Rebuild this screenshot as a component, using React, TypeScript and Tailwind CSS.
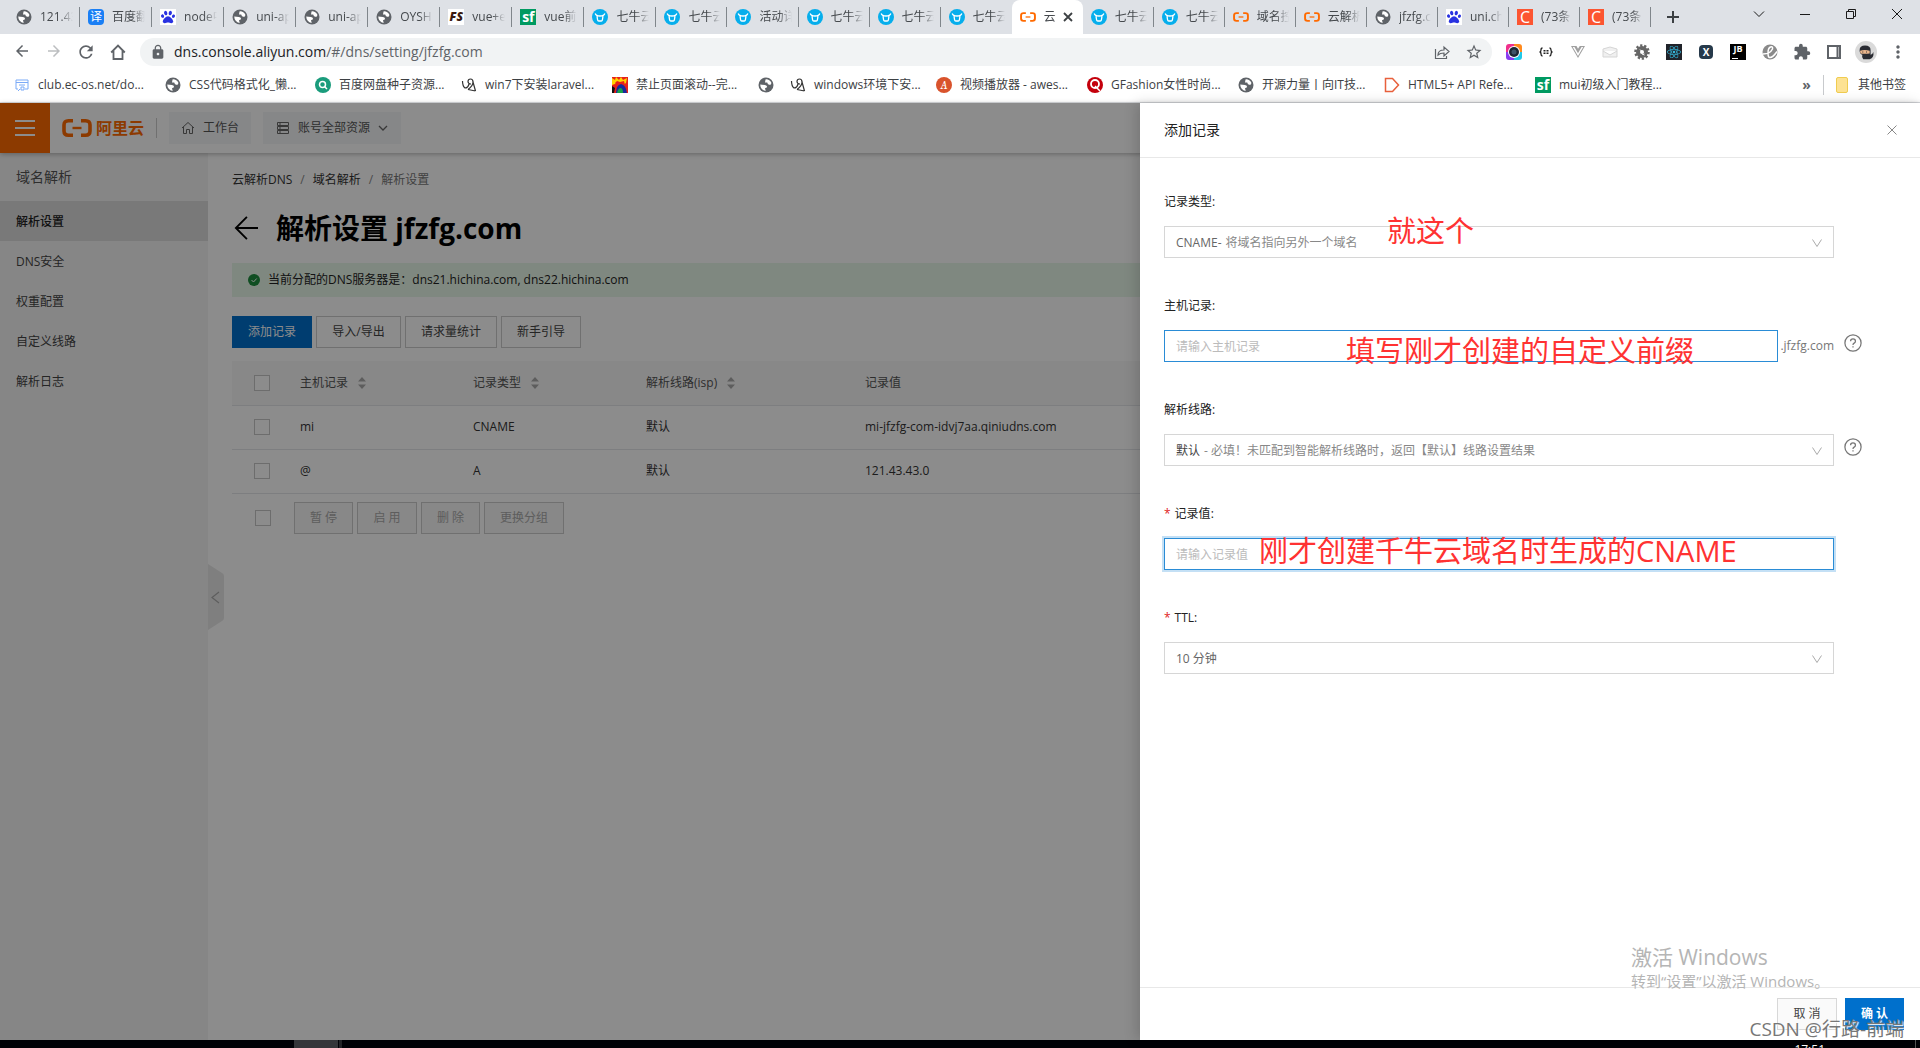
import React from 'react';
import { FaReact, FaVuejs, FaPaw } from 'react-icons/fa';
import {
  MdArrowBack,
  MdArrowForward,
  MdExtension,
  MdLock,
  MdMoreVert,
  MdRefresh,
  MdStarBorder,
} from 'react-icons/md';

type IconName =
  | 'globe' | 'fanyi' | 'baidu' | 'fs' | 'sf' | 'qiniu' | 'aliyun' | 'csdn'
  | 'card' | 'search' | 'quill' | 'flame' | 'awes' | 'gf' | 'html5';

const BracketLogo = ({ className }: { className: string }) => (
  <svg viewBox="0 0 30 18" className={className} fill="none" stroke="#ff6a00">
    <path d="M11 1.800H6.500Q2 1.800 2 6v6q0 4.200 4.500 4.200H11M19 1.800h4.500Q28 1.800 28 6v6q0 4.200-4.500 4.200H19" strokeWidth="3.600" />
    <path d="M10.500 9h9" strokeWidth="2.400" />
  </svg>
);

const SiteIcon = ({ name }: { name: IconName }) => {
  switch (name) {
    case 'globe':
      return (
        <svg viewBox="0 0 16 16" className="size-4 shrink-0">
          <circle cx="8" cy="8" r="7.500" fill="#5f6368" />
          <path d="M2.200 7.500l4.800.5q2.500.5 2 2.300l-2 .9.700 2.700Q2.500 13 2.200 7.500zM7.500 2.400q4-.4 6 3.600l-1.200 2-2.300-.8-.8-1.700H7z" fill="#fff" />
        </svg>
      );
    case 'fanyi':
      return <span className="size-4 shrink-0 rounded-sm bg-[#1a7ff5] text-center text-xs leading-4 text-white">译</span>;
    case 'baidu':
      return (
        <span className="flex size-4 shrink-0 items-center justify-center bg-white">
          <FaPaw className="size-3.5 text-[#2932e1]" />
        </span>
      );
    case 'fs':
      return <span className="size-4 shrink-0 bg-white text-center text-xs leading-4 font-black text-[#3a1a10] italic">FS</span>;
    case 'sf':
      return <span className="size-4 shrink-0 bg-[#009a61] text-center text-sm leading-4 font-bold text-white">sf</span>;
    case 'csdn':
      return <span className="size-4 shrink-0 bg-[#fc5531] text-center text-base leading-4 text-white">C</span>;
    case 'qiniu':
      return (
        <svg viewBox="0 0 16 16" className="size-4 shrink-0">
          <circle cx="8" cy="8" r="8" fill="#06aeec" />
          <path d="M3.200 4.500Q4 7 8 7t4.800-2.500M5 7.200l.6 3.600q.2 1.200 1.200 1.200h2.400q1 0 1.200-1.200l.6-3.600" fill="none" stroke="#fff" strokeWidth="1.300" />
        </svg>
      );
    case 'aliyun':
      return <BracketLogo className="h-2.5 w-4 shrink-0" />;
    case 'card':
      return (
        <svg viewBox="0 0 16 16" className="size-4 shrink-0" fill="none" stroke="#7baaf7">
          <path d="M2 3h12v9h-3M2 3v9h2M2 5.500h12M5 8h6M7 10h3v3H7zM4 14l2-2" />
        </svg>
      );
    case 'search':
      return (
        <svg viewBox="0 0 16 16" className="size-4 shrink-0" fill="none" stroke="#fff" strokeWidth="1.500">
          <circle cx="8" cy="8" r="8" fill="#1a9c7c" stroke="none" />
          <circle cx="7.500" cy="7.500" r="3" />
          <path d="M9.700 9.700l2.300 2.300" />
        </svg>
      );
    case 'quill':
      return (
        <svg viewBox="0 0 16 16" className="size-4 shrink-0" fill="none" stroke="#333" strokeWidth="1.200">
          <path d="M1.500 4q0 5 2.500 7 3 0 4-4M10 7q-3 0-3-2.500T9.500 2 12 5q0 4-5 7.500M12 5l2.500 9M7 12.500l7.500 1.500" />
        </svg>
      );
    case 'flame':
      return (
        <svg viewBox="0 0 16 16" className="size-4 shrink-0">
          <path d="M0 0h16v16H0z" fill="#e8201a" />
          <path d="M0 1l3 2 1-3 3 3 2-3 2 3 4-2-1 5-3 2-8-1-3 1z" fill="#ffd400" />
          <path d="M3 6l2-2 3 1 4-1 1 4-5 1-4-1z" fill="#e8201a" />
          <path d="M4 16q0-8 5-9 5 1 6 9z" fill="#182a9c" />
          <path d="M5 16q1-5 4-5 2 1 2 5z" fill="#17a34a" />
          <path d="M0 9l3 2-1 5H0z" fill="#111" />
        </svg>
      );
    case 'awes':
      return <span className="size-4 shrink-0 rounded-full bg-[#d9532c] text-center font-serif text-xs leading-4 text-white italic">A</span>;
    case 'gf':
      return (
        <svg viewBox="0 0 16 16" className="size-4 shrink-0">
          <circle cx="8" cy="8" r="8" fill="#c4000c" />
          <circle cx="8" cy="7" r="4" fill="none" stroke="#fff" strokeWidth="1.800" />
          <path d="M8 9l5 5" stroke="#fff" strokeWidth="1.500" />
        </svg>
      );
    case 'html5':
      return (
        <svg viewBox="0 0 16 16" className="size-4 shrink-0" fill="none" stroke="#e8603c" strokeWidth="1.500">
          <path d="M1.500 1.500h7l6 6.500-6 6.500h-7z" />
        </svg>
      );
  }
};

const tabs: { icon: IconName; title: string; active?: boolean }[] = [
  { icon: 'globe', title: '121.43' },
  { icon: 'fanyi', title: '百度翻' },
  { icon: 'baidu', title: 'node中' },
  { icon: 'globe', title: 'uni-ap' },
  { icon: 'globe', title: 'uni-ap' },
  { icon: 'globe', title: 'OYSH' },
  { icon: 'fs', title: 'vue+e' },
  { icon: 'sf', title: 'vue前' },
  { icon: 'qiniu', title: '七牛云' },
  { icon: 'qiniu', title: '七牛云' },
  { icon: 'qiniu', title: '活动详' },
  { icon: 'qiniu', title: '七牛云' },
  { icon: 'qiniu', title: '七牛云' },
  { icon: 'qiniu', title: '七牛云' },
  { icon: 'aliyun', title: '云', active: true },
  { icon: 'qiniu', title: '七牛云' },
  { icon: 'qiniu', title: '七牛云' },
  { icon: 'aliyun', title: '域名控' },
  { icon: 'aliyun', title: '云解析' },
  { icon: 'globe', title: 'jfzfg.c' },
  { icon: 'baidu', title: 'uni.ch' },
  { icon: 'csdn', title: '(73条' },
  { icon: 'csdn', title: '(73条' },
];

const bookmarks: { icon: IconName; title: string; width: string }[] = [
  { icon: 'card', title: 'club.ec-os.net/do...', width: 'w-[151px]' },
  { icon: 'globe', title: 'CSS代码格式化_懒...', width: 'w-[150px]' },
  { icon: 'search', title: '百度网盘种子资源...', width: 'w-[146px]' },
  { icon: 'quill', title: 'win7下安装laravel...', width: 'w-[151px]' },
  { icon: 'flame', title: '禁止页面滚动--完...', width: 'w-[146px]' },
  { icon: 'globe', title: '', width: 'w-8' },
  { icon: 'quill', title: 'windows环境下安...', width: 'w-[146px]' },
  { icon: 'awes', title: '视频播放器 - awes...', width: 'w-[151px]' },
  { icon: 'gf', title: 'GFashion女性时尚...', width: 'w-[151px]' },
  { icon: 'globe', title: '开源力量丨向IT技...', width: 'w-[146px]' },
  { icon: 'html5', title: 'HTML5+ API Refe...', width: 'w-[151px]' },
  { icon: 'sf', title: 'mui初级入门教程...', width: 'w-[151px]' },
];

const WindowControls = () => (
  <div className="flex h-7 text-[#1a1a1a]">
    <button aria-label="搜索标签页" className="flex w-[46px] items-center justify-center">
      <svg viewBox="0 0 12 12" className="size-3" fill="none" stroke="currentColor"><path d="M1 3.500l5 5 5-5" /></svg>
    </button>
    <button aria-label="最小化" className="flex w-[46px] items-center justify-center">
      <svg viewBox="0 0 12 12" className="size-3" fill="none" stroke="currentColor"><path d="M1 6.500h10" /></svg>
    </button>
    <button aria-label="还原" className="flex w-[46px] items-center justify-center">
      <svg viewBox="0 0 12 12" className="size-3" fill="none" stroke="currentColor"><path d="M1.500 3.500h7v7h-7zM3.500 3.500v-2h7v7h-2" /></svg>
    </button>
    <button aria-label="关闭" className="flex w-[46px] items-center justify-center">
      <svg viewBox="0 0 12 12" className="size-3" fill="none" stroke="currentColor"><path d="M1 1l10 10M11 1L1 11" /></svg>
    </button>
  </div>
);

const TabStrip = () => (
  <div className="flex h-[34px] bg-[#dee1e6]">
    <div className="flex min-w-0 flex-1 pl-2">
      {tabs.map((tab, index) => {
        const divider = !tab.active && !tabs[index + 1]?.active;
        return (
          // the leading tabs take the spare pixel of the strip
          <div key={index} className={index < 9 ? 'flex w-0 grow-72' : 'flex w-0 grow-71'}>
            <div
              className={
                tab.active
                  ? 'flex min-w-0 flex-1 items-center rounded-t-lg bg-white pl-2'
                  : 'flex min-w-0 flex-1 items-center pl-2'
              }
            >
              <SiteIcon name={tab.icon} />
              <span className="ml-2 min-w-0 flex-1 overflow-hidden mask-r-from-60% text-xs whitespace-nowrap text-[#45494d]">
                {tab.title}
              </span>
              {tab.active && (
                <button aria-label="关闭标签页" className="mr-2.5 ml-1">
                  <svg viewBox="0 0 10 10" className="size-2.5" stroke="#3c4043" strokeWidth="1.800"><path d="M1 1l8 8M9 1L1 9" /></svg>
                </button>
              )}
              {!tab.active && <span className={divider ? 'ml-1.5 h-5 w-px bg-[#80868b]' : 'ml-1.5 h-5 w-px'} />}
            </div>
          </div>
        );
      })}
    </div>
    <div className="flex w-[269px] shrink-0 justify-between">
      <button aria-label="新标签页" className="flex w-11 items-center justify-center">
        <svg viewBox="0 0 14 14" className="size-3.5" stroke="#3c4043" strokeWidth="2"><path d="M7 1v12M1 7h12" /></svg>
      </button>
      <WindowControls />
    </div>
  </div>
);

const extensions = [
  <svg viewBox="0 0 16 16" className="size-4">
    <path d="M0 3a3 3 0 013-3h5v8H0z" fill="#f0308c" />
    <path d="M8 0h5a3 3 0 013 3v5H8z" fill="#ff8a1e" />
    <path d="M0 8h8v8H3a3 3 0 01-3-3z" fill="#8a3cf0" />
    <path d="M8 8h8v5a3 3 0 01-3 3H8z" fill="#20c8e8" />
    <circle cx="8" cy="8" r="6" fill="#fff" />
    <circle cx="8" cy="8" r="5" fill="#1c2733" />
    <circle cx="8" cy="8" r="2.500" fill="#3f5468" />
  </svg>,
  <svg viewBox="0 0 16 16" className="size-4" fill="none" stroke="#222" strokeWidth="1.300">
    <path d="M4.500 4Q3 4 3 6T1.500 8Q3 8 3 10t1.500 2M11.500 4Q13 4 13 6t1.500 2Q13 8 13 10t-1.500 2" />
    <path d="M5.500 6.800h5M5.500 9.200h5" strokeDasharray="2 1" strokeWidth="1.600" />
  </svg>,
  <FaVuejs className="size-4 text-[#a0a0a0]" />,
  <svg viewBox="0 0 16 16" className="size-4" fill="#f0f0f0" stroke="#d5d5d5">
    <path d="M1 5l7-2 7 2v8H1zM1 7l7 4 7-4" />
  </svg>,
  <svg viewBox="0 0 16 16" className="size-4" fill="none" stroke="#666">
    <circle cx="8" cy="8" r="6.500" strokeWidth="2.500" strokeDasharray="2.200 1.800" />
    <circle cx="8" cy="8" r="4" strokeWidth="4" />
    <path d="M6 5.500l4 4M8 10l2.500 1" stroke="#fff" />
  </svg>,
  <span className="flex size-4 items-center justify-center bg-[#20232a]"><FaReact className="size-3.5 text-[#35b8dc]" /></span>,
  <span className="size-3.5 rounded-sm bg-[#26394a] text-center text-[10px] leading-3.5 font-bold text-white">X</span>,
  <span className="size-4 bg-black text-center text-[9px] leading-2.5 font-bold text-white">JB<span className="mt-1 ml-0.5 block h-px w-1.5 bg-white" /></span>,
  <svg viewBox="0 0 16 16" className="size-4">
    <circle cx="8" cy="8" r="7.500" fill="#8a8a8a" />
    <path d="M1 10q7 0 9.500-5Q11 2 8.500 3T6 9t2 4.500q3 0 7-6" fill="none" stroke="#fff" strokeWidth="1.500" />
  </svg>,
  <MdExtension className="size-[18px] text-[#5f6368]" />,
  <svg viewBox="0 0 16 16" className="size-4" fill="none" stroke="#5f6368" strokeWidth="2"><path d="M2 2h12v12H2zM11.500 2v12" /></svg>,
  <svg viewBox="0 0 24 24" className="size-[22px]">
    <circle cx="12" cy="12" r="12" fill="#dadada" />
    <path d="M5 10q0-5 6-5t6 5v5q2 0 3-3 1 6-4 8H9q-2-2-1-5-3-1-3-5z" fill="#2a2c33" />
    <path d="M5.500 10.500q5-1.500 10.500 0v3q-5 1-10 0z" fill="#e9b58c" />
    <path d="M8 12h1M12 12h1" stroke="#222" />
  </svg>,
  <MdMoreVert className="size-5 text-[#5f6368]" />,
];

const AddressBar = () => (
  <div className="flex h-9 items-center bg-white pr-1.5 pl-1.5">
    <div className="flex text-[#5f6368]">
      <button aria-label="后退" className="flex w-8 justify-center"><MdArrowBack className="size-[18px]" /></button>
      <button aria-label="前进" className="flex w-8 justify-center text-[#bcbec0]"><MdArrowForward className="size-[18px]" /></button>
      <button aria-label="刷新" className="flex w-8 justify-center"><MdRefresh className="size-5" /></button>
      <button aria-label="主页" className="flex w-8 items-center justify-center">
        <svg viewBox="0 0 16 16" className="size-4" fill="none" stroke="currentColor" strokeWidth="1.800"><path d="M1.200 8.500L8 1.500l6.800 7M3.500 7v8h9V7" /></svg>
      </button>
    </div>
    <div className="ml-1.5 flex h-7 flex-1 items-center rounded-full bg-[#f1f3f4] pr-0.5 pl-2.5">
      <MdLock className="size-4 text-[#5f6368]" />
      <span className="ml-2 flex-1 text-sm text-[#5f6368]">
        <span className="text-[#202124]">dns.console.aliyun.com</span>/#/dns/setting/jfzfg.com
      </span>
      <button aria-label="分享" className="flex w-8 justify-center">
        <svg viewBox="0 0 16 16" className="size-4" fill="none" stroke="#5f6368" strokeWidth="1.200">
          <path d="M1.500 5v9.500h11V12M4 11q0-5 6-5V3l5 4.500-5 4.500V9q-4 0-6 2z" />
        </svg>
      </button>
      <button aria-label="收藏" className="flex w-8 justify-center"><MdStarBorder className="size-[18px] text-[#5f6368]" /></button>
    </div>
    <div className="ml-1.5 flex">
      {extensions.map((icon, index) => (
        <button key={index} aria-label={`扩展程序 ${index + 1}`} className="flex w-8 items-center justify-center">
          {icon}
        </button>
      ))}
    </div>
  </div>
);

const BookmarkBar = () => (
  <div className="flex h-[33px] items-center border-b border-[#dadce0] bg-white pb-0.5 pl-3.5 text-xs text-[#3c4043]">
    {bookmarks.map((item, index) => (
      <a key={index} href="#" aria-label={item.title || '书签'} className={`flex items-center gap-2 whitespace-nowrap ${item.width}`}>
        <SiteIcon name={item.icon} />
        {item.title}
      </a>
    ))}
    <div className="ml-auto flex items-center pr-3.5">
      <span className="mr-3 text-sm leading-4 font-bold text-[#5f6368]">»</span>
      <span className="mr-3 h-5 w-px bg-[#c8cacd]" />
      <a href="#" className="flex items-center gap-2.5">
        <span className="h-4 w-3 rounded-xs border border-[#f0cc50] bg-[#fde293]" />
        其他书签
      </a>
    </div>
  </div>
);

const ConsoleHeader = () => (
  <header className="relative flex h-[50px] items-center bg-white text-xs text-[#555] shadow-[0_1px_5px_rgba(0,0,0,0.3)]">
    <button aria-label="菜单" className="flex h-full w-[50px] flex-col items-center justify-center gap-[5px] bg-[#ff6a00]">
      <span className="h-0.5 w-5 bg-white" />
      <span className="h-0.5 w-5 bg-white" />
      <span className="h-0.5 w-5 bg-white" />
    </button>
    <a href="#" className="ml-3 flex items-center gap-1 text-base leading-5 font-bold text-[#ff6a00]">
      <BracketLogo className="h-[18px] w-[30px]" />
      阿里云
    </a>
    <span className="ml-3 h-5 w-px bg-[#ccc]" />
    <button className="ml-3 flex h-8 w-[82px] items-center justify-center gap-2 bg-[#f4f6f8]">
      <svg viewBox="0 0 14 14" className="size-3.5" fill="none" stroke="#666"><path d="M1 7l6-5.500L13 7M2.500 6v6.500h3v-4h3v4h3V6" /></svg>
      工作台
    </button>
    <button className="ml-3 flex h-8 w-[138px] items-center justify-center gap-2 bg-[#f4f6f8]">
      <svg viewBox="0 0 14 14" className="size-3.5" fill="none" stroke="#666"><path d="M1.500 1.500h11v3h-11zM1.500 5.500h11v3h-11zM1.500 9.500h11v3h-11zM3 3h2M3 7h2M3 11h2" /></svg>
      账号全部资源
      <svg viewBox="0 0 10 10" className="size-2.5" fill="none" stroke="#666" strokeWidth="1.300"><path d="M1 3l4 4 4-4" /></svg>
    </button>
  </header>
);

const menu = ['解析设置', 'DNS安全', '权重配置', '自定义线路', '解析日志'];

const Sidebar = () => (
  <nav className="w-52 shrink-0 bg-[#f5f5f5]">
    <h2 className="flex h-12 items-center px-4 text-sm text-[#555]">域名解析</h2>
    {menu.map((item, index) => (
      <a
        key={item}
        href="#"
        className={
          index === 0
            ? 'flex h-10 items-center bg-[#dcdcdc] px-4 pt-0.5 text-xs font-medium text-[#222]'
            : 'flex h-10 items-center px-4 pt-0.5 text-xs text-[#444]'
        }
      >
        {item}
      </a>
    ))}
  </nav>
);

const SortIcon = () => (
  <svg viewBox="0 0 8 14" className="h-3.5 w-2" fill="#aaa"><path d="M4 1l4 4.500H0zM4 13l4-4.500H0z" /></svg>
);

const CheckBox = ({ label }: { label: string }) => (
  <input type="checkbox" aria-label={label} className="block size-4 appearance-none border border-[#c6c6c6] bg-white" />
);

const columns = [
  { title: '主机记录', sortable: true, width: 'w-[173px]' },
  { title: '记录类型', sortable: true, width: 'w-[173px]' },
  { title: '解析线路(isp)', sortable: true, width: 'w-[219px]' },
  { title: '记录值', sortable: false, width: '' },
];

const records = [
  ['mi', 'CNAME', '默认', 'mi-jfzfg-com-idvj7aa.qiniudns.com'],
  ['@', 'A', '默认', '121.43.43.0'],
];

const RecordTable = () => (
  <table className="mt-[13px] w-full table-fixed border-collapse text-left text-xs text-[#333]">
    <thead>
      <tr className="h-11 border-b border-[#e3e6ea] bg-[#f8f8f8]">
        <th className="w-[68px] pl-[22px]"><CheckBox label="全选" /></th>
        {columns.map((col) => (
          <th key={col.title} className={`font-normal text-[#555] ${col.width}`}>
            <span className="flex items-center gap-2.5">
              {col.title}
              {col.sortable && <SortIcon />}
            </span>
          </th>
        ))}
      </tr>
    </thead>
    <tbody>
      {records.map((row) => (
        <tr key={row[0]} className="h-11 border-b border-[#e3e6ea]">
          <td className="pl-[22px]"><CheckBox label={`选择 ${row[0]}`} /></td>
          {row.map((cell, index) => (
            <td key={index}>{cell}</td>
          ))}
        </tr>
      ))}
    </tbody>
  </table>
);

const Content = () => (
  <main className="min-w-0 flex-1 bg-white px-6 pt-[17px]">
    <div className="flex h-5 items-center gap-2 text-xs text-[#333]">
      <a href="#">云解析DNS</a>
      <span className="text-[#888]">/</span>
      <a href="#">域名解析</a>
      <span className="text-[#888]">/</span>
      <span className="text-[#777]">解析设置</span>
    </div>
    <h1 className="mt-3.5 flex h-12 items-center pl-0.5 text-[28px] font-bold text-black">
      <svg viewBox="0 0 26 26" className="mr-[18px] size-6" fill="none" stroke="#000" strokeWidth="2"><path d="M2 13h24M14 1L2 13l12 12" /></svg>
      解析设置 jfzfg.com
    </h1>
    <div className="mt-[11px] flex h-[34px] items-center gap-2 bg-[#e8f8e9] px-4 text-xs text-[#222]">
      <svg viewBox="0 0 12 12" className="size-3">
        <circle cx="6" cy="6" r="6" fill="#1e8e3e" />
        <path d="M3.500 6l2 2 3.200-3.500" fill="none" stroke="#fff" />
      </svg>
      当前分配的DNS服务器是：dns21.hichina.com, dns22.hichina.com
    </div>
    <div className="mt-[19px] flex h-8 gap-1 text-xs text-[#444]">
      <button className="w-20 bg-[#0070cc] text-white">添加记录</button>
      <button className="w-[85px] border border-[#ccc]">导入/导出</button>
      <button className="w-[92px] border border-[#ccc]">请求量统计</button>
      <button className="w-20 border border-[#ccc]">新手引导</button>
    </div>
    <RecordTable />
    <div className="mt-2 flex h-8 items-center pl-[23px] text-xs text-[#aaa]">
      <CheckBox label="批量选择" />
      <div className="ml-[23px] flex h-full gap-1">
        <button disabled className="w-[59px] border border-[#ccc] bg-[#f7f7f7]">暂 停</button>
        <button disabled className="w-[60px] border border-[#ccc] bg-[#f7f7f7]">启 用</button>
        <button disabled className="w-[59px] border border-[#ccc] bg-[#f7f7f7]">删 除</button>
        <button disabled className="w-20 border border-[#ccc] bg-[#f7f7f7]">更换分组</button>
      </div>
    </div>
  </main>
);

const HelpIcon = () => (
  <svg viewBox="0 0 20 20" className="size-[18px] shrink-0" fill="none" stroke="#777" strokeWidth="1.400">
    <circle cx="10" cy="10" r="9" />
    <path d="M7.300 8q0-2.500 2.700-2.500T12.700 8q0 1.300-1.400 2.100T10 12.300M10 13.600v1.500" />
  </svg>
);

type FieldProps = {
  id: string;
  label: string;
  required?: boolean;
  help?: boolean;
  note?: React.ReactNode;
  children: React.ReactNode;
};

const Field = ({ id, label, required, help, note, children }: FieldProps) => (
  <div className="relative mb-[22px] h-[82px]">
    <label htmlFor={id} className="mb-[15px] flex h-[18px] items-center text-xs text-[#222]">
      {required && <span className="mr-1 text-[#e02020]">*</span>}
      {label}:
    </label>
    <div className="flex">
      <div className="flex h-8 flex-1">{children}</div>
      <div className="w-[86px] pt-1 pl-2.5">{help && <HelpIcon />}</div>
    </div>
    {note}
  </div>
);

const Select = ({ id, value, hint, dark }: { id: string; value: string; hint?: string; dark?: boolean }) => (
  <div className="flex flex-1 items-center border border-[#d6d6d6] px-[11px] pt-px text-xs">
    <select
      id={id}
      className={dark ? 'appearance-none field-sizing-content text-[#444] outline-none' : 'appearance-none field-sizing-content text-[#666] outline-none'}
    >
      <option>{value}</option>
    </select>
    <span className="ml-1 flex-1 text-[#888]">{hint}</span>
    <svg viewBox="0 0 10 10" className="size-2.5" fill="none" stroke="#aaa"><path d="M0.500 1.500L5 8.500l4.500-7" /></svg>
  </div>
);

const Drawer = () => (
  <section className="absolute inset-y-0 right-0 flex w-[780px] flex-col bg-white shadow-[-4px_0_12px_rgba(0,0,0,0.15)]">
    <div className="flex h-[55px] items-center justify-between border-b border-[#e8e8e8] pr-[23px] pl-6">
      <h2 className="text-sm text-[#222]">添加记录</h2>
      <button aria-label="关闭">
        <svg viewBox="0 0 10 10" className="size-2.5" stroke="#888"><path d="M0.500 0.500l9 9M9.500 0.500l-9 9" /></svg>
      </button>
    </div>

    <form className="flex-1 pt-[35px] pl-6">
      <Field
        id="type"
        label="记录类型"
        note={<span className="absolute top-4.5 left-[223px] text-[29px] leading-10 text-[#ff3232]">就这个</span>}
      >
        <Select id="type" value="CNAME-" hint="将域名指向另外一个域名" />
      </Field>
      <Field
        id="host"
        label="主机记录"
        help
        note={<span className="absolute top-8.5 left-[182px] text-[29px] leading-10 text-[#ff3232]">填写刚才创建的自定义前缀</span>}
      >
        <input
          id="host"
          placeholder="请输入主机记录"
          className="min-w-0 flex-1 border border-[#2a8cd6] px-[11px] pt-px text-xs outline-none placeholder:text-[#bbb]"
        />
        <span className="flex w-14 items-center justify-end text-xs text-[#777]">.jfzfg.com</span>
      </Field>
      <Field id="line" label="解析线路" help>
        <Select id="line" value="默认" hint="- 必填！未匹配到智能解析线路时，返回【默认】线路设置结果" dark />
      </Field>
      <Field
        id="value"
        label="记录值"
        required
        note={<span className="absolute top-6.5 left-[95px] text-[29px] leading-10 text-[#ff3232]">刚才创建千牛云域名时生成的CNAME</span>}
      >
        <input
          id="value"
          placeholder="请输入记录值"
          className="min-w-0 flex-1 border border-[#2a8cd6] px-[11px] pt-px text-xs ring-2 ring-[#c4e0f5] outline-none placeholder:text-[#bbb]"
        />
      </Field>
      <Field id="ttl" label="TTL" required>
        <Select id="ttl" value="10 分钟" />
      </Field>
    </form>

    <div className="flex h-[53px] justify-end gap-2 border-t border-[#e8e8e8] pt-2.5 pr-4 text-xs">
      <button className="h-8 w-[60px] border border-[#d8d8d8] bg-[#fafafa] text-[#444]">取 消</button>
      <button className="h-8 w-[59px] bg-[#0070cc] font-bold text-white">确 认</button>
    </div>

    <div className="pointer-events-none absolute right-[94px] bottom-[49px] w-[195px] text-[#b5b5b5]">
      <p className="text-[21px] leading-7">激活 Windows</p>
      <p className="text-[15px] leading-5 whitespace-nowrap">转到“设置”以激活 Windows。</p>
    </div>
    <p className="pointer-events-none absolute right-4 -bottom-px text-[19px] leading-6 whitespace-nowrap text-[#777] text-shadow-[1px_1px_1px_#fff]">
      CSDN @行路-前端
    </p>
  </section>
);

const Taskbar = () => (
  <footer className="flex h-2 shrink-0 overflow-hidden bg-[#000106] pl-[294px]">
    <span className="w-11 bg-[#35363a]" />
    <span className="ml-px w-[3px] bg-[#222327]" />
    <span className="mt-0.5 mr-[90px] ml-auto text-xs leading-4 text-white">17:51</span>
    <span className="mr-1 w-px bg-[#555]" />
  </footer>
);

const App = () => {
  return (
    <div className="flex h-screen flex-col overflow-hidden font-['Open_Sans','Noto_Sans_CJK_SC',sans-serif]">
      <TabStrip />
      <AddressBar />
      <BookmarkBar />
      <div className="relative flex min-h-0 flex-1 flex-col">
        <ConsoleHeader />
        <div className="flex min-h-0 flex-1">
          <Sidebar />
          <Content />
        </div>
        <svg viewBox="0 0 16 66" className="absolute top-[461px] left-52 h-[66px] w-4">
          <path d="M0 0l14 9q2 1 2 3v42q0 2-2 3L0 66z" fill="#e8e8e8" />
          <path d="M11 28l-7 5.500 7 5.500" fill="none" stroke="#aaa" strokeWidth="1.200" />
        </svg>
        <div className="absolute inset-0 bg-black/45" />
        <Drawer />
      </div>
      <Taskbar />
    </div>
  );
};

export default App;
